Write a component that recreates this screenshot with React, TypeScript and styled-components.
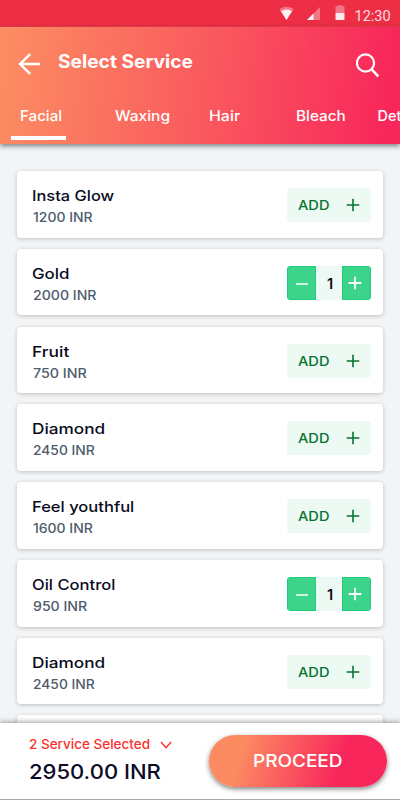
import React, { useLayoutEffect, useRef, useState } from "react";
import styled, { createGlobalStyle, css } from "styled-components";

const GlobalStyle = createGlobalStyle`
  * { box-sizing: border-box; }
  html, body { margin: 0; padding: 0; overflow: hidden; }
  body { font-family: Inter, sans-serif; background: #f2f4f6; }
  button { font: inherit; border: 0; padding: 0; background: none; cursor: pointer; }
`;

const Slot = styled.span<{ $width: number }>`
  display: block;
  width: ${(p) => p.$width}px;
  text-align: left;
  white-space: nowrap;
  flex: none;
`;

const Stretch = styled.span`
  display: inline-block;
  transform-origin: 0 50%;
  vertical-align: top;
`;

function Wide({ width, children }: { width: number; children: React.ReactNode }) {
  const ref = useRef<HTMLSpanElement>(null);
  const [scale, setScale] = useState(1);
  useLayoutEffect(() => {
    if (ref.current) setScale(width / ref.current.offsetWidth);
  }, [width]);
  return (
    <Slot $width={width}>
      <Stretch ref={ref} style={{ transform: `scaleX(${scale})` }}>{children}</Stretch>
    </Slot>
  );
}

const Screen = styled.div`
  width: 400px;
  height: 800px;
  display: flex;
  flex-direction: column;
  overflow: hidden;
  background: #f2f4f6;
`;

const StatusBar = styled.div`
  flex: none;
  height: 27px;
  display: flex;
  justify-content: flex-end;
  background: #ed2e45;
  border-bottom: 1px solid #f03f50;
`;

const StatusIcons = styled.svg`
  width: 70px;
  height: 26px;
`;

const Clock = styled.span`
  width: 50px;
  padding-left: 4.5px;
  font: 400 14.5px/33px Roboto, sans-serif;
  color: #ffdfe2;
`;

const Header = styled.header`
  flex: none;
  height: 117px;
  position: relative;
  z-index: 1;
  color: #fff;
  background: linear-gradient(97deg, #fc8c62 2%, #fa5b5e 50%, #f8265b 97%);
  box-shadow: 0 2px 5px rgba(0, 0, 0, 0.5);
`;

const TitleRow = styled.div`
  height: 69px;
  display: flex;
  align-items: center;
  padding: 0 20px 0 18px;
`;

const Title = styled.h1`
  flex: 1;
  margin: -2px 0 0 17px;
  font-size: 18.2px;
  line-height: 24px;
  font-weight: 700;
`;

const IconButton = styled.button<{ $drop: number }>`
  color: #fff;
  display: flex;
  margin-top: ${(p) => p.$drop}px;
`;

const Tabs = styled.nav`
  height: 48px;
  display: flex;
  overflow: hidden;
`;

const Tab = styled.button<{ $gap: number; $active?: boolean }>`
  flex: none;
  position: relative;
  color: #fff;
  height: 44px;
  margin-left: ${(p) => p.$gap}px;
  text-align: left;
  font-size: 14.4px;
  line-height: 20px;
  font-weight: 500;
  display: flex;
  align-items: flex-start;
  padding: 10px 0 4px;
  ${(p) =>
    p.$active &&
    css`
      &::after {
        content: "";
        position: absolute;
        left: -9px;
        top: 40px;
        width: 55px;
        height: 4px;
        background: #fff;
      }
    `}
`;

const List = styled.main`
  flex: 1;
  min-height: 0;
  overflow: hidden;
  padding: 27px 17px 0;
  display: flex;
  flex-direction: column;
  gap: 11.1px;
`;

const Card = styled.article`
  flex: none;
  height: 66.7px;
  display: flex;
  justify-content: space-between;
  padding: 15.1px 12px 0 14.8px;
  background: #fff;
  border-radius: 4px;
  box-shadow: 0 1px 4px rgba(0, 0, 0, 0.22);
`;

const Name = styled.div`
  font-size: 14.6px;
  line-height: 20px;
  font-weight: 500;
  color: #080b1c;
`;

const Price = styled.div`
  margin: 3px 0 0 1px;
  font-size: 12.8px;
  line-height: 18px;
  font-weight: 500;
  color: #505c6d;
`;

const AddButton = styled.button`
  width: 84px;
  height: 34px;
  margin-top: 2px;
  display: flex;
  align-items: center;
  justify-content: space-between;
  padding: 0 11.5px 0 11px;
  border-radius: 4px;
  background: #ecfaf3;
  color: #087331;
  font-size: 13.2px;
  line-height: 20px;
  font-weight: 500;
`;

const Stepper = styled.div`
  width: 84px;
  height: 34px;
  margin-top: 2px;
  display: grid;
  grid-template-columns: 29px 26px 29px;
  border-radius: 4px;
  overflow: hidden;
  background: #ecfaf3;
`;

const StepButton = styled.button<{ $nudge?: number }>`
  display: flex;
  align-items: center;
  justify-content: center;
  padding-right: ${(p) => p.$nudge ?? 0}px;
  background: #3bd48a;
  box-shadow: inset 0 0 0 1px #20cd7b;
  color: #fff;
`;

const Count = styled.span`
  padding: 2px 0 0 2px;
  text-align: center;
  font-size: 14.5px;
  line-height: 32px;
  font-weight: 600;
  color: #080b1c;
`;

const Footer = styled.footer`
  flex: none;
  position: relative;
  z-index: 1;
  height: 77px;
  display: flex;
  justify-content: space-between;
  padding: 12px 13.5px 0 28.5px;
  background: #fff;
  border-bottom: 1px solid #aaa9aa;
  box-shadow: 0 -1px 5px rgba(0, 0, 0, 0.38);
`;

const Selected = styled.button`
  display: flex;
  align-items: center;
  gap: 9.5px;
  margin-top: 0.7px;
  color: #fb2f2c;
  font-size: 12.9px;
  line-height: 18px;
  font-weight: 500;
`;

const Total = styled.div`
  margin-top: 5.5px;
  font-size: 20px;
  line-height: 26px;
  font-weight: 500;
  color: #0b0c28;
`;

const Proceed = styled.button`
  width: 177.5px;
  height: 52px;
  display: flex;
  align-items: center;
  padding-left: 43.5px;
  border-radius: 26px;
  background: linear-gradient(107deg, #fc8b62 19%, #f8265b 73%);
  box-shadow: 0 2px 5px rgba(0, 0, 0, 0.5);
  color: #fff;
  font-size: 17.3px;
  line-height: 24px;
  font-weight: 500;
`;

function Plus({ size = 14, weight = 1.6 }: { size?: number; weight?: number }) {
  return (
    <svg width={size} height={size} viewBox="0 0 14 14" stroke="currentColor" strokeWidth={weight}>
      <path d="M7 .7v12.6M.7 7h12.6" />
    </svg>
  );
}

interface Service {
  name: string;
  nameWidth: number;
  price: string;
  priceWidth: number;
  count?: number;
}

const services: Service[] = [
  { name: "Insta Glow", nameWidth: 82, price: "1200 INR", priceWidth: 60 },
  { name: "Gold", nameWidth: 37, price: "2000 INR", priceWidth: 64, count: 1 },
  { name: "Fruit", nameWidth: 37, price: "750 INR", priceWidth: 53.5 },
  { name: "Diamond", nameWidth: 73, price: "2450 INR", priceWidth: 61.5 },
  { name: "Feel youthful", nameWidth: 102, price: "1600 INR", priceWidth: 60 },
  { name: "Oil Control", nameWidth: 84, price: "950 INR", priceWidth: 54, count: 1 },
  { name: "Diamond", nameWidth: 73, price: "2450 INR", priceWidth: 61.5 },
];

const tabs = [
  { label: "Facial", width: 42, gap: 20 },
  { label: "Waxing", width: 55, gap: 53.4 },
  { label: "Hair", width: 31, gap: 38.4 },
  { label: "Bleach", width: 50, gap: 55.8 },
  { label: "Detan", width: 41, gap: 32 },
];

export default function App() {
  return (
    <>
      <GlobalStyle />
      <Screen>
        <StatusBar>
          <StatusIcons viewBox="280 0 70 26">
            <path d="M279.3 9.1Q286.5 4.2 293.7 9.1L286.5 20z" fill="#fff" opacity=".35" />
            <path d="M281 11.2Q286.5 7.8 292 11.2L286.5 20z" fill="#fff" opacity=".9" />
            <path d="M307 20L320 7v13z" fill="#fff" opacity=".35" />
            <path d="M307 20L313.5 13.5V20z" fill="#fff" opacity=".9" />
            <path d="M335.5 13V7q0-.8.8-.8h1.2V5.2h5v1h1.2q.8 0 .8.8v6z" fill="#fff" opacity=".35" />
            <path d="M335.5 13h9v6.2q0 .8-.8.8h-7.4q-.8 0-.8-.8z" fill="#fff" opacity=".9" />
          </StatusIcons>
          <Clock><Wide width={36}>12:30</Wide></Clock>
        </StatusBar>
        <Header>
          <TitleRow>
            <IconButton aria-label="Back" $drop={4}>
              <svg width="23" height="22" viewBox="0 0 23 22" fill="none" stroke="currentColor" strokeWidth="2.4">
                <path d="M22 11H2M12.2 1.2L2 11l10.2 9.8" />
              </svg>
            </IconButton>
            <Title><Wide width={135}>Select Service</Wide></Title>
            <IconButton aria-label="Search" $drop={7}>
              <svg width="24" height="25" viewBox="0 0 24 25" fill="none" stroke="currentColor" strokeWidth="2.2">
                <circle cx="9.5" cy="10" r="8.6" />
                <path d="M15.6 16.4l6.7 7" strokeWidth="2.6" />
              </svg>
            </IconButton>
          </TitleRow>
          <Tabs>
            {tabs.map((t, i) => (
              <Tab key={t.label} $gap={t.gap} $active={i === 0}>
                <Wide width={t.width}>{t.label}</Wide>
              </Tab>
            ))}
          </Tabs>
        </Header>
        <List>
          {services.map((s, i) => (
            <Card key={i}>
              <div>
                <Name><Wide width={s.nameWidth}>{s.name}</Wide></Name>
                <Price><Wide width={s.priceWidth}>{s.price}</Wide></Price>
              </div>
              {s.count ? (
                <Stepper>
                  <StepButton aria-label="Remove one">
                    <svg width="12" height="14" viewBox="0 0 12 14" stroke="currentColor" strokeWidth="1.7">
                      <path d="M0 8h12" />
                    </svg>
                  </StepButton>
                  <Count>{s.count}</Count>
                  <StepButton aria-label="Add one" $nudge={4}><Plus weight={1.8} /></StepButton>
                </Stepper>
              ) : (
                <AddButton>
                  <Wide width={31}>ADD</Wide>
                  <Plus />
                </AddButton>
              )}
            </Card>
          ))}
          <Card />
        </List>
        <Footer>
          <div>
            <Selected>
              <Wide width={121.5}>2 Service Selected</Wide>
              <svg width="12" height="8" viewBox="0 0 12 8" fill="none" stroke="currentColor" strokeWidth="1.4">
                <path d="M1 1l5 5.6L11 1" />
              </svg>
            </Selected>
            <Total><Wide width={132}>2950.00 INR</Wide></Total>
          </div>
          <Proceed><Wide width={90}>PROCEED</Wide></Proceed>
        </Footer>
      </Screen>
    </>
  );
}
